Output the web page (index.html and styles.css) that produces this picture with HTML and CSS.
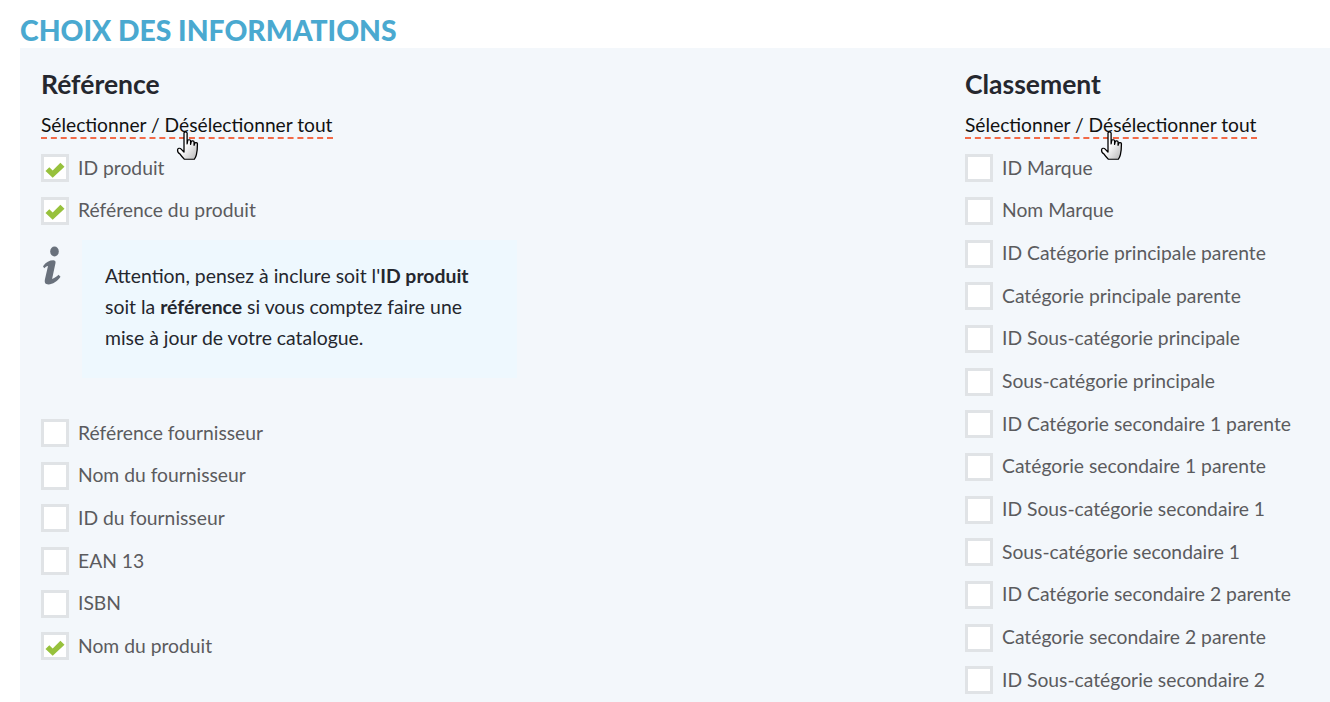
FILE: index.html
```html
<!DOCTYPE html>
<html lang="fr">
<head>
<meta charset="utf-8">
<title>Choix des informations</title>
<link rel="stylesheet" href="styles.css">
</head>
<body>
<h1 class="title">CHOIX DES INFORMATIONS</h1>
<div class="panel">
  <section class="col">
    <h2 class="col-title">Référence</h2>
    <a class="toggle">Sélectionner / Désélectionner tout<svg class="hand" viewBox="0 0 24 32" preserveAspectRatio="none" aria-hidden="true"><defs><linearGradient id="g1" x1="0" y1="0" x2="1" y2="1"><stop offset="0.45" stop-color="#fff"/><stop offset="1" stop-color="#b5b5b5"/></linearGradient></defs><path d="M6.2 1.8c0-1.2 2.4-1.2 2.4 0v9.4l.5-3c.2-1 2.200-.8 2.200.4v3l.5-2.400c.2-1 2.200-.8 2.200.4v2.800l.5-1.800c.3-1 2.100-.7 2.100.5 0 3-.3 7-.8 9.300-.3 1.600-1 3-1.600 4H6.400c-1-1.200-2.300-2.800-3.400-4.600C2 19.400 1.200 17.600 1.200 16.400c0-1.600 1.800-2 2.800-.8l2.200 2.600z" fill="url(#g1)" stroke="#000" stroke-width="1" stroke-linejoin="round"/></svg></a>
    <ul class="list">
      <li class="row"><span class="box checked"><svg class="check" viewBox="0 0 20 16" aria-hidden="true"><path d="M.5 9l3.800-3.800 3.400 3.300L15.400.8 19.500 4.700 7.700 15.800z" fill="#97c13c"/></svg></span>ID produit</li>
      <li class="row"><span class="box checked"><svg class="check" viewBox="0 0 20 16" aria-hidden="true"><path d="M.5 9l3.800-3.800 3.400 3.300L15.400.8 19.500 4.700 7.700 15.800z" fill="#97c13c"/></svg></span>Référence du produit</li>
    </ul>
    <div class="notice">
      <svg class="info" viewBox="0 0 20 40" preserveAspectRatio="none" aria-hidden="true"><circle cx="12.500" cy="4.800" r="4.300" fill="#69717c"/><path d="M1 17.500c3-3.500 7-5.200 11-5 1.600.1 1.800 1.300 1.400 2.800l-3.300 13.300c3-.8 4.700-2 6.400-3.500l2 1.700c-3.300 4-7.800 6.600-12 6.600-3.300 0-4.300-1.500-3.500-4.700l3-11.300c-1.500.3-2.600.9-3.800 2z" fill="#69717c"/></svg>
      <p class="notice-box">Attention, pensez à inclure soit l'<b>ID produit</b> soit la <b>référence</b> si vous comptez faire une mise à jour de votre catalogue.</p>
    </div>
    <ul class="list">
      <li class="row"><span class="box"></span>Référence fournisseur</li>
      <li class="row"><span class="box"></span>Nom du fournisseur</li>
      <li class="row"><span class="box"></span>ID du fournisseur</li>
      <li class="row"><span class="box"></span>EAN 13</li>
      <li class="row"><span class="box"></span>ISBN</li>
      <li class="row"><span class="box checked"><svg class="check" viewBox="0 0 20 16" aria-hidden="true"><path d="M.5 9l3.800-3.800 3.400 3.300L15.400.8 19.500 4.700 7.700 15.800z" fill="#97c13c"/></svg></span>Nom du produit</li>
    </ul>
  </section>
  <section class="col">
    <h2 class="col-title">Classement</h2>
    <a class="toggle">Sélectionner / Désélectionner tout<svg class="hand" viewBox="0 0 24 32" preserveAspectRatio="none" aria-hidden="true"><defs><linearGradient id="g2" x1="0" y1="0" x2="1" y2="1"><stop offset="0.45" stop-color="#fff"/><stop offset="1" stop-color="#b5b5b5"/></linearGradient></defs><path d="M6.2 1.8c0-1.2 2.4-1.2 2.4 0v9.4l.5-3c.2-1 2.200-.8 2.200.4v3l.5-2.400c.2-1 2.200-.8 2.200.4v2.800l.5-1.800c.3-1 2.100-.7 2.100.5 0 3-.3 7-.8 9.300-.3 1.600-1 3-1.600 4H6.400c-1-1.200-2.300-2.800-3.400-4.600C2 19.400 1.200 17.600 1.200 16.400c0-1.600 1.800-2 2.800-.8l2.200 2.600z" fill="url(#g2)" stroke="#000" stroke-width="1" stroke-linejoin="round"/></svg></a>
    <ul class="list">
      <li class="row"><span class="box"></span>ID Marque</li>
      <li class="row"><span class="box"></span>Nom Marque</li>
      <li class="row"><span class="box"></span>ID Catégorie principale parente</li>
      <li class="row"><span class="box"></span>Catégorie principale parente</li>
      <li class="row"><span class="box"></span>ID Sous-catégorie principale</li>
      <li class="row"><span class="box"></span>Sous-catégorie principale</li>
      <li class="row"><span class="box"></span>ID Catégorie secondaire 1 parente</li>
      <li class="row"><span class="box"></span>Catégorie secondaire 1 parente</li>
      <li class="row"><span class="box"></span>ID Sous-catégorie secondaire 1</li>
      <li class="row"><span class="box"></span>Sous-catégorie secondaire 1</li>
      <li class="row"><span class="box"></span>ID Catégorie secondaire 2 parente</li>
      <li class="row"><span class="box"></span>Catégorie secondaire 2 parente</li>
      <li class="row"><span class="box"></span>ID Sous-catégorie secondaire 2</li>
    </ul>
  </section>
</div>
</body>
</html>
```
FILE: styles.css
```css
* { box-sizing: border-box; }
html, body { height: 702px; overflow: hidden; }
body {
  margin: 0;
  background: #fff;
  font-family: "Lato", "Liberation Sans", sans-serif;
  color: #5a5a5a;
}
.title {
  margin: 0;
  height: 48px;
  padding: 12px 0 0 20px;
  font-size: 28.300px;
  line-height: 36px;
  font-weight: 900;
  color: #4aa9d0;
}
.panel {
  margin-left: 20px;
  height: 654px;
  background: #f3f7fb;
  padding: 20px 0 0 21px;
  display: grid;
  grid-template-columns: 924px 1fr;
}
.col-title {
  margin: 0;
  font-size: 26.500px;
  line-height: 32px;
  font-weight: 700;
  color: #25272e;
}
.toggle {
  display: inline-block;
  position: relative;
  margin-top: 12px;
  height: 27px;
  font-size: 19.200px;
  line-height: 26px;
  color: #111;
  border-bottom: 2px dashed #f26a48;
}
.hand {
  position: absolute;
  left: 135px;
  top: 19px;
  width: 31px;
  height: 37px;
}
.list {
  list-style: none;
  margin: 0;
  padding: 0;
}
.col > .toggle + .list { margin-top: 8px; }
.row {
  display: flex;
  align-items: center;
  gap: 9px;
  height: 42.670px;
  padding-bottom: 2px;
  font-size: 19.300px;
  color: #5b5b5e;
}
.box {
  width: 28px;
  height: 28px;
  flex: none;
  margin-top: 2px;
  background: #fff;
  border: 3px solid #e0e3e6;
  display: flex;
  align-items: center;
  justify-content: center;
}
.check { width: 20px; height: 16px; flex: none; margin-top: 3px; }
.notice {
  display: flex;
  height: 179.500px;
  padding-top: 8px;
}
.info {
  width: 20px;
  height: 46px;
  flex: none;
  margin: 5.500px 20px 0 1px;
}
.notice-box {
  margin: 0;
  width: 435px;
  height: 138px;
  padding: 20px 20px 0 23px;
  background: #eef8fe;
  font-size: 19.400px;
  line-height: 31px;
  color: #25272e;
}
.notice-box b { font-weight: 700; }
```
